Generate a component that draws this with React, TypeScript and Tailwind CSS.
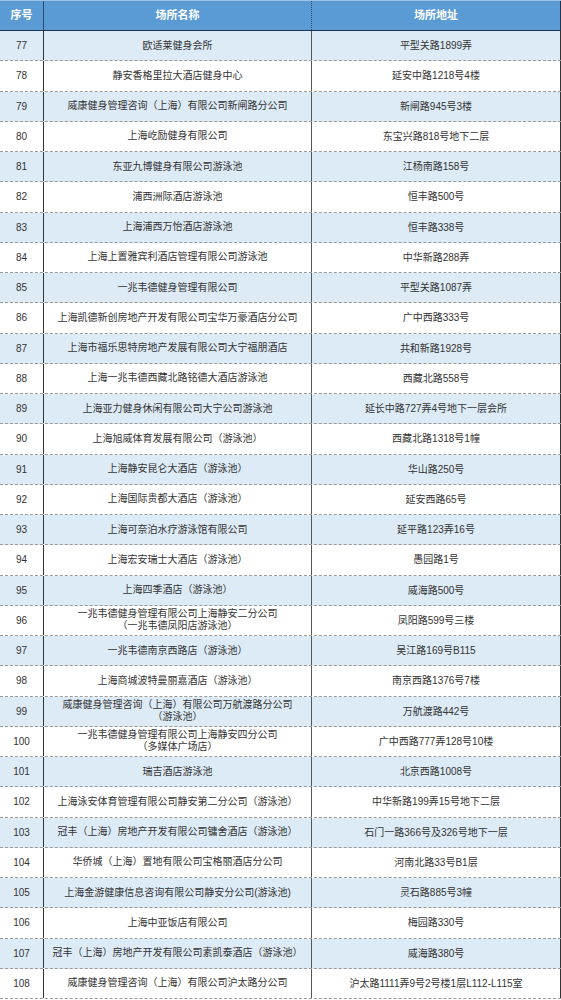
const rows: [number, string, string][] = [
  [77, "欧适莱健身会所", "平型关路1899弄"],
  [78, "静安香格里拉大酒店健身中心", "延安中路1218号4楼"],
  [79, "威康健身管理咨询（上海）有限公司新闸路分公司", "新闸路945号3楼"],
  [80, "上海屹励健身有限公司", "东宝兴路818号地下二层"],
  [81, "东亚九博健身有限公司游泳池", "江杨南路158号"],
  [82, "浦西洲际酒店游泳池", "恒丰路500号"],
  [83, "上海浦西万怡酒店游泳池", "恒丰路338号"],
  [84, "上海上置雅宾利酒店管理有限公司游泳池", "中华新路288弄"],
  [85, "一兆韦德健身管理有限公司", "平型关路1087弄"],
  [86, "上海凯德新创房地产开发有限公司宝华万豪酒店分公司", "广中西路333号"],
  [87, "上海市福乐思特房地产发展有限公司大宁福朋酒店", "共和新路1928号"],
  [88, "上海一兆韦德西藏北路铭德大酒店游泳池", "西藏北路558号"],
  [89, "上海亚力健身休闲有限公司大宁公司游泳池", "延长中路727弄4号地下一层会所"],
  [90, "上海旭威体育发展有限公司（游泳池）", "西藏北路1318号1幢"],
  [91, "上海静安昆仑大酒店（游泳池）", "华山路250号"],
  [92, "上海国际贵都大酒店（游泳池）", "延安西路65号"],
  [93, "上海可奈泊水疗游泳馆有限公司", "延平路123弄16号"],
  [94, "上海宏安瑞士大酒店（游泳池）", "愚园路1号"],
  [95, "上海四季酒店（游泳池）", "威海路500号"],
  [96, "一兆韦德健身管理有限公司上海静安二分公司\n（一兆韦德凤阳店游泳池）", "凤阳路599号三楼"],
  [97, "一兆韦德南京西路店（游泳池）", "吴江路169号B115"],
  [98, "上海商城波特曼丽嘉酒店（游泳池）", "南京西路1376号7楼"],
  [99, "威康健身管理咨询（上海）有限公司万航渡路分公司\n（游泳池）", "万航渡路442号"],
  [100, "一兆韦德健身管理有限公司上海静安四分公司\n（多媒体广场店）", "广中西路777弄128号10楼"],
  [101, "瑞吉酒店游泳池", "北京西路1008号"],
  [102, "上海泳安体育管理有限公司静安第二分公司（游泳池）", "中华新路199弄15号地下二层"],
  [103, "冠丰（上海）房地产开发有限公司镛舍酒店（游泳池）", "石门一路366号及326号地下一层"],
  [104, "华侨城（上海）置地有限公司宝格丽酒店分公司", "河南北路33号B1层"],
  [105, "上海金游健康信息咨询有限公司静安分公司(游泳池)", "灵石路885号3幢"],
  [106, "上海中亚饭店有限公司", "梅园路330号"],
  [107, "冠丰（上海）房地产开发有限公司素凯泰酒店（游泳池）", "威海路380号"],
  [108, "威康健身管理咨询（上海）有限公司沪太路分公司", "沪太路1111弄9号2号楼1层L112-L115室"],
];

export default function App() {
  return (
    <div
      className="w-[561px] bg-white text-[#333] text-[10px]"
      style={{ fontFamily: '"Liberation Sans", "Noto Sans CJK SC", sans-serif' }}
    >
      {/* header */}
      <div className="flex h-[31px] bg-[#5b9bd5] border-t border-t-[#9cc3e6] border-b border-b-[#1f3550] text-white font-bold text-[11px]">
        <div className="w-[44px] flex items-center justify-center border-r border-[#2c4a6b]">序号</div>
        <div className="w-[268px] flex items-center justify-center border-r border-dotted border-[#2c4a6b]">场所名称</div>
        <div className="flex-1 flex items-center justify-center border-r border-[#1f3550]">场所地址</div>
      </div>

      {rows.map(([no, name, addr], i) => (
        <div
          key={no}
          className={`flex h-[30.26px] border-b border-dashed border-[#9a9a9a] ${i % 2 === 0 ? "bg-[#ddebf7]" : "bg-white"}`}
        >
          <div className="w-[44px] flex items-center justify-center border-r border-[#333] text-[10px]">{no}</div>
          <div className="w-[268px] flex items-center justify-center border-r border-[#555] text-center leading-[12px] whitespace-pre-line">
            {name}
          </div>
          <div className="flex-1 flex items-center justify-center border-r border-[#333] text-center">{addr}</div>
        </div>
      ))}
    </div>
  );
}
